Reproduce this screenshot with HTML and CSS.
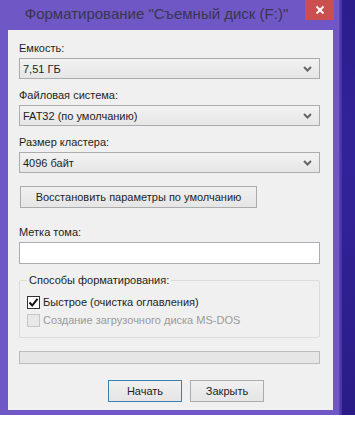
FILE: index.html
```html
<!DOCTYPE html>
<html lang="ru">
<head>
  <meta charset="UTF-8">
  <title>Форматирование</title>
  <link rel="stylesheet" href="styles.css">
</head>
<body>
  <div class="screen">
    <!-- окно форматирования -->
    <div class="window">
      <div class="titlebar">
        <span class="title">Форматирование "Съемный диск (F:)"</span>
        <span class="close-btn">
          <svg width="10" height="10" viewBox="0 0 10 10"><path d="M1.5 1.5 L8.5 8.5 M8.5 1.5 L1.5 8.5" stroke="#fff" stroke-width="1.8"/></svg>
        </span>
      </div>

      <div class="client">
        <div class="label first">Емкость:</div>
        <div class="combo"><span>7,51 ГБ</span><svg class="chevron" width="9" height="6" viewBox="0 0 9 6"><path d="M1 1 L4.5 4.5 L8 1" fill="none" stroke="#666" stroke-width="2"/></svg></div>

        <div class="label">Файловая система:</div>
        <div class="combo"><span>FAT32 (по умолчанию)</span><svg class="chevron" width="9" height="6" viewBox="0 0 9 6"><path d="M1 1 L4.5 4.5 L8 1" fill="none" stroke="#666" stroke-width="2"/></svg></div>

        <div class="label">Размер кластера:</div>
        <div class="combo"><span>4096 байт</span><svg class="chevron" width="9" height="6" viewBox="0 0 9 6"><path d="M1 1 L4.5 4.5 L8 1" fill="none" stroke="#666" stroke-width="2"/></svg></div>

        <button class="btn restore-btn">Восстановить параметры по умолчанию</button>

        <div class="label volume-label">Метка тома:</div>
        <div class="text-input"></div>

        <fieldset class="group">
          <legend>Способы форматирования:</legend>
          <div class="check-row">
            <span class="checkbox checked">
              <svg width="11" height="11" viewBox="0 0 11 11"><path d="M1.5 5.5 L4.2 8.5 L9.5 1.8" fill="none" stroke="#111" stroke-width="2"/></svg>
            </span>
            <span>Быстрое (очистка оглавления)</span>
          </div>
          <div class="check-row disabled">
            <span class="checkbox"></span>
            <span>Создание загрузочного диска MS-DOS</span>
          </div>
        </fieldset>

        <div class="progress"></div>

        <div class="actions">
          <button class="btn default-btn">Начать</button>
          <button class="btn">Закрыть</button>
        </div>
      </div>
    </div>

    <!-- рабочий стол справа -->
    <div class="desktop"></div>
  </div>
</body>
</html>
```

FILE: styles.css
```css
/* базовые стили */
body {
  margin: 0;
  background-color: #fff;
  font-family: "Liberation Sans", Arial, sans-serif;
  font-size: 11px;
  color: #1e1e1e;
}

.screen {
  display: flex;
  height: 415px;
}

/* окно */
.window {
  width: 340px;
  background-color: #6f57c5;
  border-right: 1px solid #5a44b0;
  padding: 0 6px 5px 8px;
  box-sizing: border-box;
  display: flex;
  flex-direction: column;
}
.desktop {
  flex: 1;
  background: linear-gradient(180deg, #2b1d8c 0%, #33239a 40%, #2a1c86 100%);
  border-left: 2px solid #4a36a8;
}

/* заголовок */
.titlebar {
  height: 30px;
  display: flex;
  align-items: flex-start;
}
.title {
  flex: 1;
  text-align: center;
  font-size: 15px;
  line-height: 28px;
  color: #3a3550;
}
.close-btn {
  width: 29px;
  height: 20px;
  background-color: #c9504f;
  display: flex;
  align-items: center;
  justify-content: center;
  margin-right: -1px;
}

/* клиентская область */
.client {
  flex: 1;
  background-color: #f0f0f0;
  padding: 0 13px 0 11px;
}
.label {
  line-height: 16px;
  margin-top: 8px;
  margin-bottom: 2px;
}
.label.first {
  margin-top: 10px;
}

/* выпадающие списки */
.combo {
  height: 21px;
  box-sizing: border-box;
  border: 1px solid #acacac;
  background: linear-gradient(#f2f2f2, #e6e6e6);
  display: flex;
  align-items: center;
  justify-content: space-between;
  padding: 0 7px 0 3px;
}
.chevron {
  display: block;
}

/* кнопки */
.btn {
  font-family: inherit;
  font-size: 11px;
  color: #1e1e1e;
  height: 22px;
  border: 1px solid #acacac;
  background: linear-gradient(#f0f0f0, #e5e5e5);
  padding: 0;
  cursor: pointer;
}
.restore-btn {
  display: block;
  width: 237px;
  margin-top: 13px;
  margin-left: 1px;
}
.default-btn {
  border-color: #3c7fb1;
}

/* метка тома */
.volume-label {
  margin-top: 16px;
}
.text-input {
  height: 22px;
  box-sizing: border-box;
  border: 1px solid #abadb3;
  background-color: #fff;
}

/* группа */
.group {
  margin: 8px 0 0;
  padding: 0 0 0 7px;
  border: 1px solid #dcdcdc;
  border-radius: 2px;
  height: 66px;
  box-sizing: border-box;
}
.group legend {
  padding: 0 2px;
  line-height: 16px;
}
.check-row {
  display: flex;
  align-items: center;
  gap: 3px;
  height: 18px;
  margin-top: 5px;
}
.check-row + .check-row {
  margin-top: 0;
}
.checkbox {
  width: 13px;
  height: 13px;
  box-sizing: border-box;
  border: 1px solid #333;
  background-color: #fff;
  display: flex;
  align-items: center;
  justify-content: center;
}
.check-row.disabled {
  color: #9a9a9a;
}
.check-row.disabled .checkbox {
  border-color: #c6c6c6;
  background-color: #e8e8e8;
}

/* прогресс */
.progress {
  margin-top: 13px;
  height: 13px;
  box-sizing: border-box;
  border: 1px solid #bcbcbc;
  background-color: #e6e6e6;
}

/* нижние кнопки */
.actions {
  display: flex;
  gap: 8px;
  margin-top: 16px;
  padding-left: 89px;
}
.actions .btn {
  width: 74px;
}
```
